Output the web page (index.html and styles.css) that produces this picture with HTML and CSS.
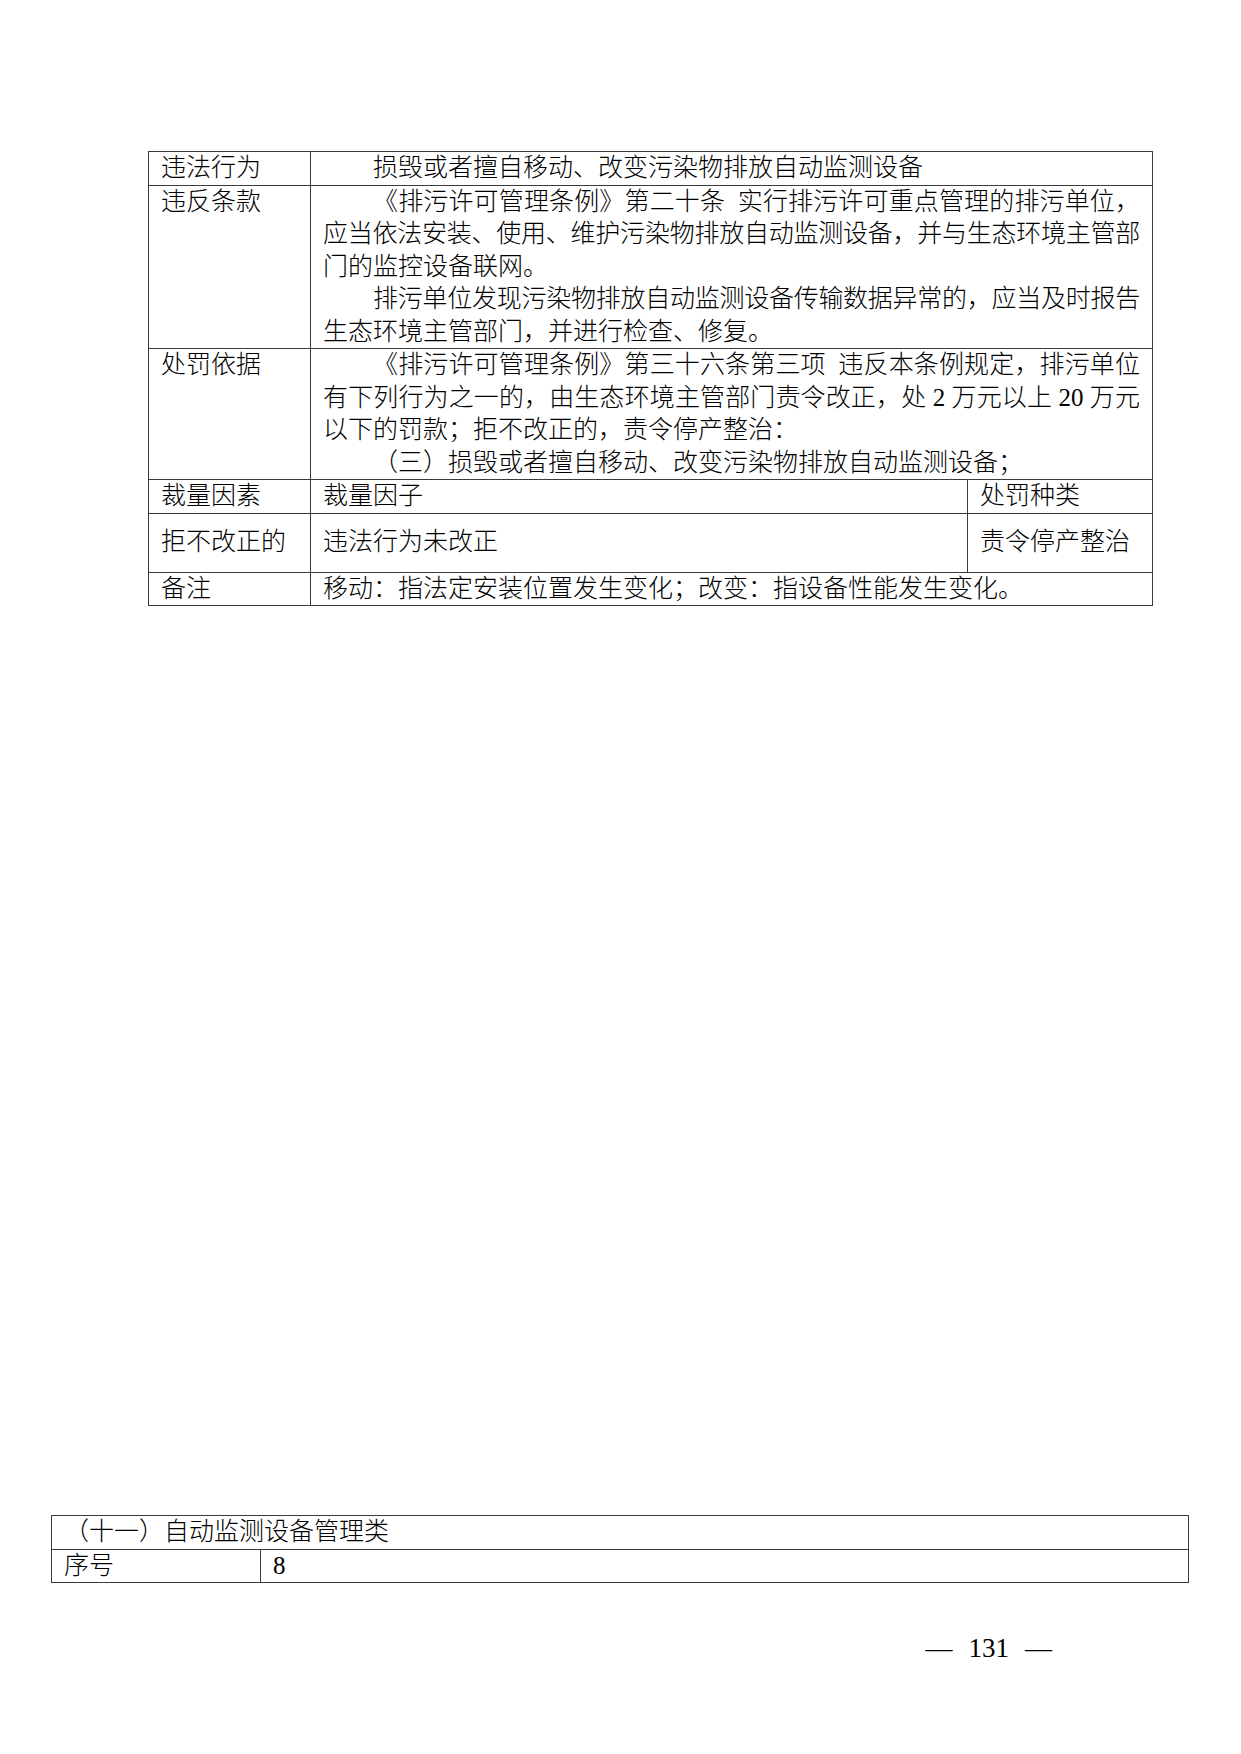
FILE: index.html
```html
<!DOCTYPE html>
<html lang="zh-CN">
<head>
<meta charset="utf-8">
<title>自动监测设备管理类</title>
<link rel="stylesheet" href="styles.css">
</head>
<body>
<div class="page">
  <table class="grid grid-main">
    <colgroup>
      <col class="c-label">
      <col class="c-factor">
      <col class="c-kind">
    </colgroup>
    <tr class="r-one">
      <td>违法行为</td>
      <td colspan="2"><span class="ln ind">损毁或者擅自移动、改变污染物排放自动监测设备</span></td>
    </tr>
    <tr>
      <td>违反条款</td>
      <td colspan="2">
        <span class="ln ind j">《排污许可管理条例》第二十条&ensp;实行排污许可重点管理的排污单位，</span>
        <span class="ln j tight">应当依法安装、使用、维护污染物排放自动监测设备，并与生态环境主管部</span>
        <span class="ln">门的监控设备联网。</span>
        <span class="ln ind j tight">排污单位发现污染物排放自动监测设备传输数据异常的，应当及时报告</span>
        <span class="ln">生态环境主管部门，并进行检查、修复。</span>
      </td>
    </tr>
    <tr>
      <td>处罚依据</td>
      <td colspan="2">
        <span class="ln ind j">《排污许可管理条例》第三十六条第三项&ensp;违反本条例规定，排污单位</span>
        <span class="ln j">有下列行为之一的，由生态环境主管部门责令改正，处 2 万元以上 20 万元</span>
        <span class="ln">以下的罚款；拒不改正的，责令停产整治：</span>
        <span class="ln ind">（三）损毁或者擅自移动、改变污染物排放自动监测设备；</span>
      </td>
    </tr>
    <tr class="r-one">
      <td>裁量因素</td>
      <td>裁量因子</td>
      <td>处罚种类</td>
    </tr>
    <tr class="r-mid">
      <td>拒不改正的</td>
      <td>违法行为未改正</td>
      <td>责令停产整治</td>
    </tr>
    <tr class="r-one">
      <td>备注</td>
      <td colspan="2">移动：指法定安装位置发生变化；改变：指设备性能发生变化。</td>
    </tr>
  </table>

  <table class="grid grid-next">
    <colgroup>
      <col class="c-no">
      <col>
    </colgroup>
    <tr class="r-one">
      <td colspan="2" class="cat">（十一）自动监测设备管理类</td>
    </tr>
    <tr class="r-one">
      <td>序号</td>
      <td>8</td>
    </tr>
  </table>

  <div class="folio">
    <span class="dash">—</span>
    <span class="num">131</span>
    <span class="dash">—</span>
  </div>
</div>
</body>
</html>
```

FILE: styles.css
```css
html, body {
  margin: 0;
  padding: 0;
  background: #ffffff;
}

body {
  font-family: "Liberation Serif", "Noto Sans CJK SC", serif;
  font-size: 25px;
  font-weight: 300;
  color: #000000;
}

.page {
  width: 1241px;
  height: 1754px;
  box-sizing: border-box;
  padding-top: 151px;
  overflow: hidden;
}

.grid {
  border-collapse: collapse;
  table-layout: fixed;
}

.grid td {
  border: 1px solid #3a3a3a;
  padding: 0 12px;
  line-height: 32.5px;
  vertical-align: top;
  text-align: left;
  white-space: nowrap;
}

.grid-main {
  margin-left: 148px;
  width: 1004px;
}

.c-label { width: 162px; }
.c-factor { width: 657px; }
.c-kind { width: 185px; }

.r-mid td {
  height: 58px;
  vertical-align: middle;
}

.ln {
  display: block;
  white-space: nowrap;
}

.ind {
  text-indent: 2em;
}

.j {
  text-align: justify;
  text-align-last: justify;
}

.tight {
  letter-spacing: -0.3px;
}

.grid-next {
  margin-left: 51px;
  margin-top: 909px;
  width: 1138px;
}

.grid-next td {
  padding: 0 12px;
}

.c-no { width: 209px; }

.folio {
  display: flex;
  justify-content: flex-end;
  align-items: baseline;
  gap: 16px;
  padding-right: 189px;
  margin-top: 45px;
  font-size: 27px;
  line-height: 40px;
  font-weight: 400;
}
```
